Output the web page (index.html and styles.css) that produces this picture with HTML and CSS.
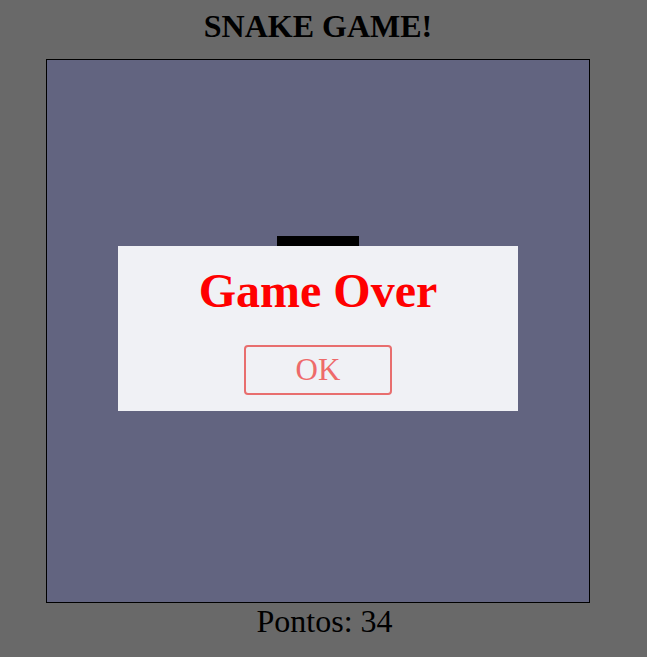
FILE: index.html
```html
<!DOCTYPE html>
<html lang="pt">
<head>
<meta charset="utf-8">
<title>Snake Game</title>
<link rel="stylesheet" href="styles.css">
</head>
<body>
  <main class="page">
    <div class="game">
      <h1 class="title">SNAKE GAME!</h1>
      <div class="board">
        <div class="snake"></div>
        <div class="dialog">
          <h2 class="over">Game Over</h2>
          <button class="ok">OK</button>
        </div>
      </div>
    </div>
    <p class="score">Pontos: 34</p>
  </main>
</body>
</html>
```

FILE: styles.css
```css
html, body {
  margin: 0;
  padding: 0;
  background: #696969;
  font-family: "Liberation Serif", "Times New Roman", serif;
  color: #000;
}

.page {
  display: flex;
  flex-direction: column;
  align-items: center;
}

.game {
  width: 636px;
  align-self: flex-start;
  display: flex;
  flex-direction: column;
  align-items: center;
}

.title {
  margin: 8px 0 0;
  font-size: 32px;
  font-weight: bold;
  line-height: 37px;
}

.board {
  position: relative;
  margin-top: 14px;
  width: 542px;
  height: 542px;
  border: 1px solid #000;
  background: #626480;
}

.snake {
  position: absolute;
  left: 230px;
  top: 176px;
  width: 82px;
  height: 12px;
  background: #000;
}

.dialog {
  position: absolute;
  left: 71px;
  top: 186px;
  width: 400px;
  height: 165px;
  box-sizing: border-box;
  background: #f0f1f5;
  display: flex;
  flex-direction: column;
  align-items: center;
  padding-top: 17px;
}

.over {
  margin: 0;
  color: #ff0000;
  font-size: 48px;
  font-weight: bold;
  line-height: normal;
}

.ok {
  margin-top: 27px;
  width: 148px;
  height: 50px;
  box-sizing: border-box;
  border: 2px solid #e86e6e;
  border-radius: 4px;
  background: transparent;
  color: #ee6a6a;
  font-family: "Liberation Serif", "Times New Roman", serif;
  font-size: 31px;
  padding: 0;
  line-height: normal;
}

.score {
  margin: 0;
  font-size: 32px;
  line-height: normal;
  transform: translateX(1px);
}
```
